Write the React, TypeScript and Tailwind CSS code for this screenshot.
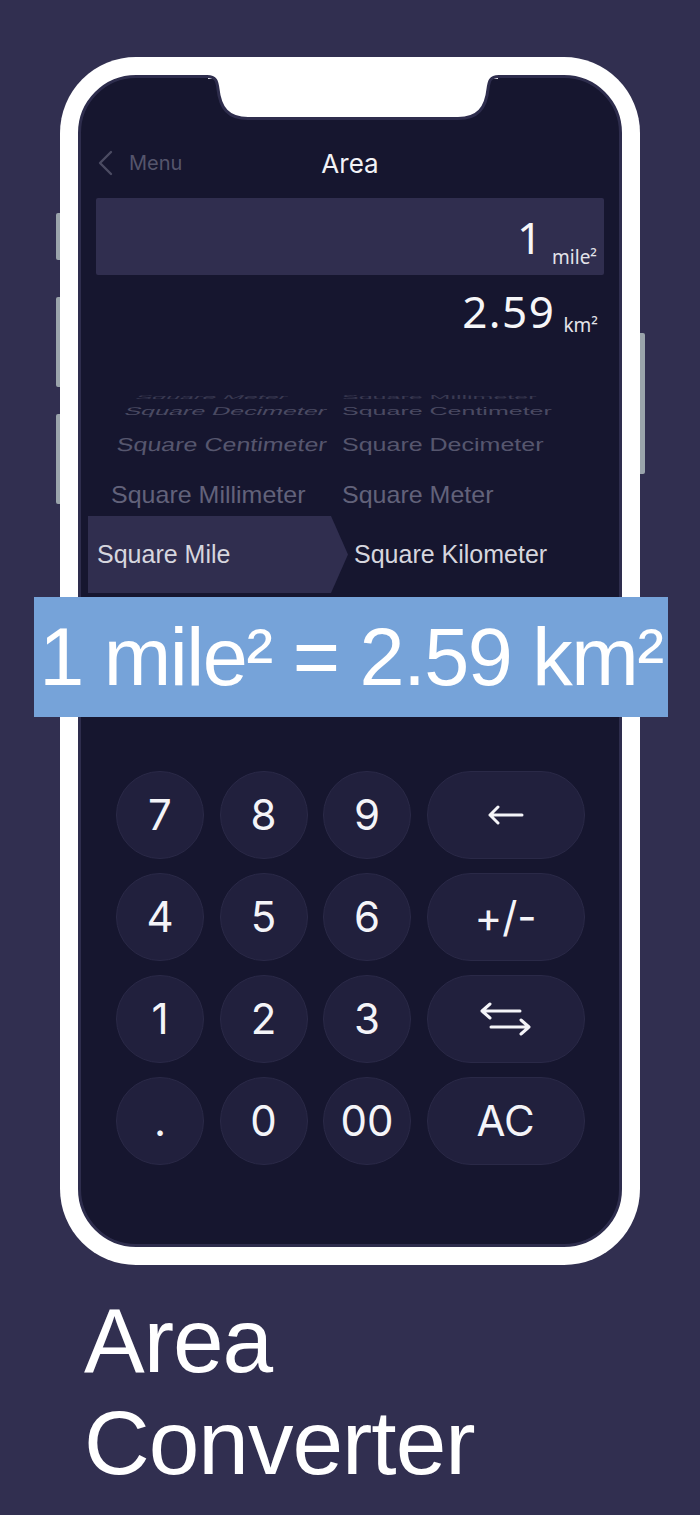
import React from 'react'

const keys: { label: React.ReactNode; wide?: boolean }[][] = [
  [{ label: '7' }, { label: '8' }, { label: '9' }, { label: 'back', wide: true }],
  [{ label: '4' }, { label: '5' }, { label: '6' }, { label: '+/-', wide: true }],
  [{ label: '1' }, { label: '2' }, { label: '3' }, { label: 'swap', wide: true }],
  [{ label: '.' }, { label: '0' }, { label: '00' }, { label: 'AC', wide: true }],
]

const BackArrow = () => (
  <svg width="37" height="22" viewBox="0 0 37 22" fill="none" stroke="#f4f4f8" strokeWidth="3" strokeLinecap="round" strokeLinejoin="round">
    <path d="M35 11H3M11 3L3 11L11 19" />
  </svg>
)

const SwapArrows = () => (
  <svg width="54" height="34" viewBox="0 0 54 34" fill="none" stroke="#f4f4f8" strokeWidth="3" strokeLinecap="round" strokeLinejoin="round">
    <path d="M41 9H3M11 2L3 9L11 16" />
    <path d="M12 25H50M42 18L50 25L42 32" />
  </svg>
)

const KeyLabel = ({ label }: { label: React.ReactNode }) => {
  if (label === 'back') return <BackArrow />
  if (label === 'swap') return <SwapArrows />
  return <span>{label}</span>
}

// picker rows, top (furthest) to selected
const pickerRows = [
  { h: 'h-[14px]', left: 'Square Meter', right: 'Square Millimeter', lp: 'pl-[55px]', color: 'text-[#3a3a52]', sy: 'scale-y-[0.22]', sk: '-skew-x-12', pt: '' },
  { h: 'h-[24px]', left: 'Square Decimeter', right: 'Square Centimeter', lp: 'pl-[44px]', color: 'text-[#4a4a62]', sy: 'scale-y-[0.45]', sk: '-skew-x-12', pt: '' },
  { h: 'h-[42px]', left: 'Square Centimeter', right: 'Square Decimeter', lp: 'pl-[36px]', color: 'text-[#56566e]', sy: 'scale-y-[0.75]', sk: '-skew-x-6', pt: '' },
  { h: 'h-[51px]', left: 'Square Millimeter', right: 'Square Meter', lp: 'pl-[30px]', color: 'text-[#62627a]', sy: 'scale-y-[0.92]', sk: 'skew-x-0', pt: 'pt-[10px]' },
]

export default function App() {
  return (
    <div className="w-[700px] h-[1515px] bg-[#312f50] flex flex-col relative overflow-hidden">
      {/* Phone */}
      <div className="mt-[57px] ml-[60px] w-[580px] h-[1208px] relative rounded-[76px] bg-white p-[18px]">
        {/* side buttons */}
        <div className="absolute left-[-4px] top-[156px] w-[4px] h-[47px] rounded-l-[2px] bg-[#9aa4ab]" />
        <div className="absolute left-[-4px] top-[240px] w-[4px] h-[90px] rounded-l-[2px] bg-[#9aa4ab]" />
        <div className="absolute left-[-4px] top-[357px] w-[4px] h-[90px] rounded-l-[2px] bg-[#9aa4ab]" />
        <div className="absolute right-[-5px] top-[276px] w-[5px] h-[141px] rounded-r-[2px] bg-[#9aa4ab]" />

        {/* Screen */}
        <div className="relative h-full rounded-[58px] border-[3px] border-[#2e2d4d] bg-[#16162f] flex flex-col">
          {/* notch */}
          <svg className="absolute left-[123px] top-[-3px]" width="298" height="48" viewBox="0 0 298 48">
            <rect x="4" y="0" width="290" height="4" fill="#ffffff" />
            <path
              d="M-2 1.5 L3 1.5 C12 1.5 13 6 14 14 C16 33 24 43.5 44 43.5 L254 43.5 C274 43.5 282 33 284 14 C285 6 286 1.5 295 1.5 L300 1.5"
              fill="#ffffff"
              stroke="#2e2d4d"
              strokeWidth="3"
            />
          </svg>

          {/* nav */}
          <div className="mt-[63px] h-[44px] relative flex items-center justify-center">
            <div className="absolute left-[16px] top-0 h-full flex items-center gap-[15px]">
              <svg width="17" height="26" viewBox="0 0 17 26" fill="none" stroke="#4b4b62" strokeWidth="2.4" strokeLinecap="round" strokeLinejoin="round">
                <path d="M14 2L3 13L14 24" />
              </svg>
              <span className="text-[20px] text-[#55556c]" style={{ fontFamily: 'Inter, sans-serif' }}>Menu</span>
            </div>
            <span className="text-[26px] text-[#f2f2f6]" style={{ fontFamily: 'Inter, sans-serif' }}>Area</span>
          </div>

          {/* input */}
          <div className="mx-[15px] mt-[13px] h-[77px] bg-[#302e4f] rounded-[2px] flex items-end justify-end pr-[7px]">
            <span className="text-[44px] leading-none tracking-[1px] text-[#f6f6f8] mb-[16px]" style={{ fontFamily: '"Noto Sans", sans-serif' }}>1</span>
            <span className="text-[19px] leading-none text-[#e4e4ea] ml-[9px] mb-[8px]" style={{ fontFamily: '"Noto Sans", sans-serif' }}>mile²</span>
          </div>

          {/* output */}
          <div className="h-[70px] flex items-end justify-end pr-[21px]">
            <span className="text-[44px] leading-none tracking-[1.5px] text-[#f6f6f8] mb-[12px]" style={{ fontFamily: '"Noto Sans", sans-serif' }}>2.59</span>
            <span className="text-[19px] leading-none text-[#e4e4ea] ml-[8px] mb-[10px]" style={{ fontFamily: '"Noto Sans", sans-serif' }}>km²</span>
          </div>

          {/* picker */}
          <div className="mt-[40px] flex flex-col" style={{ fontFamily: '"Liberation Sans", Arial, sans-serif' }}>
            {pickerRows.map((r, i) => (
              <div key={i} className={`${r.h} ${r.pt} grid grid-cols-[261px_1fr] items-center overflow-hidden text-[25px] leading-none ${r.color}`}>
                <div className={r.lp}>
                  <span className={`inline-block whitespace-nowrap ${r.sy} ${r.sk}`}>{r.left}</span>
                </div>
                <div>
                  <span className={`inline-block whitespace-nowrap ${r.sy}`}>{r.right}</span>
                </div>
              </div>
            ))}
            <div className="h-[77px] grid grid-cols-[261px_1fr] items-center text-[25px] leading-none text-[#d6d6de]">
              <div className="ml-[7px] w-[260px] h-[77px] bg-[#302e4f] flex items-center pl-[9px] [clip-path:polygon(0_0,calc(100%-17px)_0,100%_50%,calc(100%-17px)_100%,0_100%)]">
                <span className="whitespace-nowrap">Square Mile</span>
              </div>
              <div className="pl-[12px]">
                <span className="whitespace-nowrap">Square Kilometer</span>
              </div>
            </div>
          </div>

          {/* keypad */}
          <div className="mt-[178px] ml-[35px] flex flex-col gap-y-[14px]" style={{ fontFamily: 'Inter, sans-serif' }}>
            {keys.map((row, ri) => (
              <div key={ri} className="flex gap-x-[15.5px]">
                {row.map((k, ki) => (
                  <div
                    key={ki}
                    className={`${k.wide ? 'w-[158px]' : 'w-[88px]'} h-[88px] rounded-full bg-[#21203d] border border-[#2a2947] flex items-center justify-center text-[42px] leading-none text-[#f4f4f8]`}
                  >
                    <KeyLabel label={k.label} />
                  </div>
                ))}
              </div>
            ))}
          </div>
        </div>
      </div>

      {/* result banner */}
      <div className="absolute left-[34px] top-[597px] w-[634px] h-[120px] bg-[#76a3d9] flex items-center justify-center">
        <span className="text-[81px] leading-none tracking-[-1.5px] text-white whitespace-nowrap" style={{ fontFamily: '"Liberation Sans", Arial, sans-serif' }}>
          1 mile² = 2.59 km²
        </span>
      </div>

      {/* title */}
      <div className="mt-[25px] ml-[84px] text-[91px] leading-[102px] tracking-[-1px] text-white" style={{ fontFamily: '"Liberation Sans", Arial, sans-serif' }}>
        <div>Area</div>
        <div>Converter</div>
      </div>
    </div>
  )
}
